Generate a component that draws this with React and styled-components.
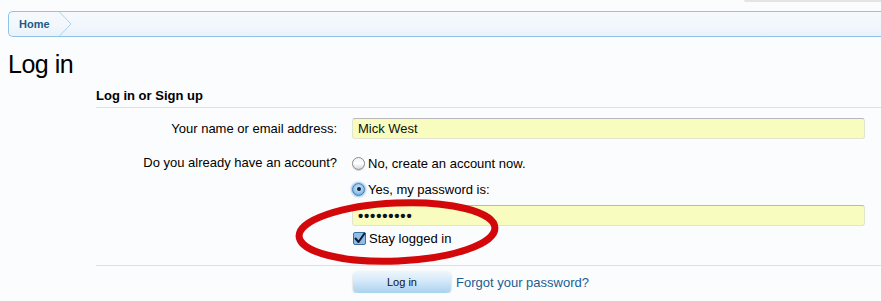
import React from 'react'
import styled, { createGlobalStyle } from 'styled-components'

const GlobalStyle = createGlobalStyle`
    html, body {
        margin: 0;
        padding: 0;
        background: #fbfcfe;
        overflow: hidden;
    }
    body {
        font-family: "Liberation Sans", Arial, sans-serif;
        font-size: 13px;
        color: #000;
    }
`;

const Page = styled.div`
    padding: 0 0 0 8px;
    position: relative;
    overflow: hidden;
`;

const TopStrip = styled.div`
    display: flex;
    justify-content: flex-end;
    height: 2px;
`;

const SearchEdge = styled.div`
    width: 136px;
    height: 0;
    border-bottom: 2px solid #e4e4e6;
    border-left: 1px solid #e4e4e6;
    border-bottom-left-radius: 3px;
`;

const Breadcrumb = styled.div`
    margin-top: 9px;
    height: 24px;
    display: flex;
    align-items: stretch;
    border: 1px solid #90c4e5;
    border-right: none;
    border-radius: 5px 0 0 5px;
    background: linear-gradient(to bottom, #f5f9fd 0%, #f1f7fc 60%, #e9f2fa 100%);
`;

const Crumb = styled.a`
    display: flex;
    align-items: center;
    padding: 0 0 0 10px;
    width: 40px;
    font-size: 11px;
    font-weight: 700;
    color: #1d5a88;
    text-decoration: none;
`;

const CrumbArrow = styled.svg`
    display: block;
    width: 13px;
    height: 24px;
`;

const Title = styled.h1`
    margin: 12px 0 0;
    font-size: 25px;
    font-weight: 400;
    line-height: 30px;
    letter-spacing: -0.5px;
`;

const Form = styled.div`
    margin: 9px 0 0 88px;
    position: relative;
`;

const SectionHeader = styled.h3`
    margin: 0;
    font-size: 13px;
    font-weight: 700;
    line-height: 16px;
    padding-bottom: 3px;
    border-bottom: 1px solid #c8e6f7;
`;

const Row = styled.div`
    display: grid;
    grid-template-columns: 241px 513px;
    column-gap: 15px;
    margin-top: ${({ $top }) => $top}px;
`;

const Label = styled.div`
    text-align: right;
    line-height: ${({ $line }) => $line || 22}px;
`;

const Controls = styled.div`
    display: flex;
    flex-direction: column;
`;

const TextBox = styled.div`
    height: 21px;
    box-sizing: border-box;
    padding: 0 5px;
    margin-top: ${({ $top }) => $top || 0}px;
    display: flex;
    align-items: center;
    background: #f8fdbf;
    border: 1px solid #e2e4d0;
    border-top-color: #b8b8b8;
    border-radius: 3px;
    font-size: 13px;
    color: #111;
`;

const Dots = styled.span`
    font-size: 15px;
    font-weight: 700;
    letter-spacing: 0.8px;
    line-height: 1;
`;

const Option = styled.label`
    display: flex;
    align-items: center;
    height: 14px;
    gap: 3px;
    margin-top: ${({ $top }) => $top || 0}px;
`;

const Radio = styled.span`
    width: 13px;
    height: 13px;
    box-sizing: border-box;
    border-radius: 50%;
    display: flex;
    align-items: center;
    justify-content: center;
    border: 1px solid ${({ $checked }) => ($checked ? '#3f79b4' : '#8a8a8a')};
    background: ${({ $checked }) =>
        $checked
            ? 'radial-gradient(circle at 50% 40%, #d8ecfb 0%, #8cc1ec 60%, #4b8fd1 100%)'
            : 'linear-gradient(to bottom, #f2f2f2 0%, #ffffff 50%, #d8d8d8 100%)'};
    box-shadow: ${({ $checked }) => ($checked ? '0 0 2px 1px #8fc1ec' : '0 1px 1px rgba(0,0,0,0.15)')};

    &::after {
        content: '';
        display: ${({ $checked }) => ($checked ? 'block' : 'none')};
        width: 4px;
        height: 4px;
        border-radius: 50%;
        background: #10243a;
    }
`;

const CheckBox = styled.svg`
    width: 13px;
    height: 13px;
    display: block;
    margin-left: 1px;
`;

const Divider = styled.div`
    margin-top: 20px;
    border-top: 1px solid #c8e6f7;
`;

const ButtonRow = styled.div`
    display: flex;
    align-items: center;
    gap: 5px;
    margin: 5px 0 0 257px;
`;

const Button = styled.button`
    width: 98px;
    height: 22px;
    border: none;
    border-radius: 5px;
    background: linear-gradient(to bottom, #eef6fc 0%, #d4e9f8 45%, #a9d2ee 100%);
    box-shadow: 0 1px 2px rgba(0, 0, 0, 0.25);
    font-family: "Liberation Sans", Arial, sans-serif;
    font-size: 11px;
    color: #111;
    padding: 0;
`;

const Link = styled.a`
    color: #1a5e92;
    text-decoration: none;
    font-size: 13px;
`;

const Circle = styled.svg`
    position: absolute;
    left: 196px;
    top: 109px;
    width: 210px;
    height: 70px;
    pointer-events: none;
    overflow: visible;
`;

export default function App() {
    return (
        <>
            <GlobalStyle />
            <Page>
                <TopStrip>
                    <SearchEdge />
                </TopStrip>
                <Breadcrumb>
                    <Crumb href="#">Home</Crumb>
                    <CrumbArrow viewBox="0 0 13 24">
                        <polyline points="0.5,0 12,12 0.5,24" fill="none" stroke="#a9d1ed" strokeWidth="1" />
                    </CrumbArrow>
                </Breadcrumb>
                <Title>Log in</Title>
                <Form>
                    <SectionHeader>Log in or Sign up</SectionHeader>
                    <Row $top={10}>
                        <Label>Your name or email address:</Label>
                        <TextBox>Mick West</TextBox>
                    </Row>
                    <Row $top={16}>
                        <Label $line={14}>Do you already have an account?</Label>
                        <Controls>
                            <Option>
                                <Radio />
                                No, create an account now.
                            </Option>
                            <Option $top={12}>
                                <Radio $checked />
                                Yes, my password is:
                            </Option>
                            <TextBox $top={9}>
                                <Dots>•••••••••</Dots>
                            </TextBox>
                            <Option $top={5}>
                                <CheckBox viewBox="0 0 13 13">
                                    <rect x="0.5" y="0.5" width="12" height="12" rx="1.5" fill="#8fbde6" stroke="#3a6fa6" />
                                    <path d="M2.5 6.5 L5.5 10 L11.5 1.5" fill="none" stroke="#0b1b33" strokeWidth="2" strokeLinecap="round" strokeLinejoin="round" />
                                </CheckBox>
                                Stay logged in
                            </Option>
                        </Controls>
                    </Row>
                    <Divider />
                    <ButtonRow>
                        <Button>Log in</Button>
                        <Link href="#">Forgot your password?</Link>
                    </ButtonRow>
                    <Circle viewBox="0 0 210 70">
                        <ellipse cx="105" cy="35" rx="98" ry="29" fill="none" stroke="#d3080b" strokeWidth="7" transform="rotate(-2.5 105 35)" />
                    </Circle>
                </Form>
            </Page>
        </>
    )
}
